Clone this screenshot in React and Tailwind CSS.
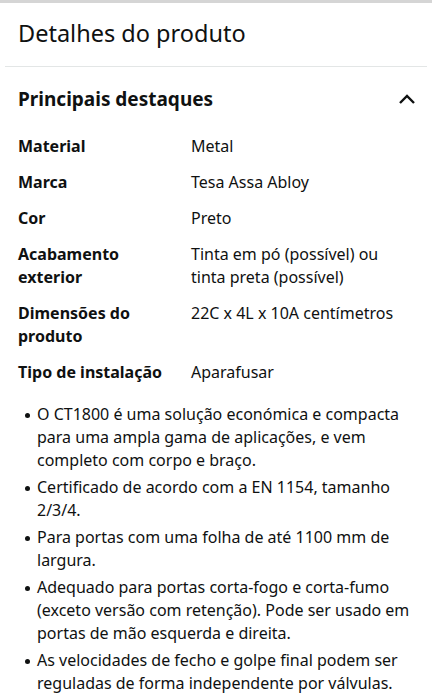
const specs = [
  ['Material', 'Metal'],
  ['Marca', 'Tesa Assa Abloy'],
  ['Cor', 'Preto'],
  ['Acabamento exterior', 'Tinta em pó (possível) ou tinta preta (possível)'],
  ['Dimensões do produto', '22C x 4L x 10A centímetros'],
  ['Tipo de instalação', 'Aparafusar'],
]

const bullets = [
  'O CT1800 é uma solução económica e compacta para uma ampla gama de aplicações, e vem completo com corpo e braço.',
  'Certificado de acordo com a EN 1154, tamanho 2/3/4.',
  'Para portas com uma folha de até 1100 mm de largura.',
  'Adequado para portas corta-fogo e corta-fumo (exceto versão com retenção). Pode ser usado em portas de mão esquerda e direita.',
  'As velocidades de fecho e golpe final podem ser reguladas de forma independente por válvulas.',
]

function App() {
  return (
    <div className="min-h-[700px] bg-white text-[#0f1111] font-['Noto_Sans',sans-serif] overflow-hidden">
      <div className="h-[3px] bg-[#d5d5d5]" />
      <h1 className="px-[18px] pt-[14px] pb-[17px] text-[23.5px] leading-[32px]">Detalhes do produto</h1>
      <div className="mx-[5px] h-px bg-[#e3e6e6]" />

      <div className="flex items-center justify-between pl-[18px] pr-[16px] pt-[18px] pb-[22px]">
        <h2 className="text-[19px] leading-[28px] font-bold">Principais destaques</h2>
        <svg width="18" height="12" viewBox="0 0 18 12" fill="none">
          <path d="M2 10 L9 3 L16 10" stroke="#0f1111" strokeWidth="2.4" />
        </svg>
      </div>

      <div className="flex flex-col gap-[13px] px-[18px] text-[16px] leading-[23px]">
        {specs.map(([label, value]) => (
          <div key={label} className="flex">
            <div className="w-[173px] shrink-0 pr-3 font-bold">{label}</div>
            <div className="flex-1">{value}</div>
          </div>
        ))}
      </div>

      <ul className="mt-[19px] flex flex-col gap-[4px] pl-[37px] pr-[16px] text-[16px] leading-[23px]">
        {bullets.map((b) => (
          <li key={b} className="relative">
            <span className="absolute left-[-12px] top-[10px] h-[5px] w-[5px] rounded-full bg-[#0f1111]" />
            {b}
          </li>
        ))}
      </ul>
    </div>
  )
}

export default App
